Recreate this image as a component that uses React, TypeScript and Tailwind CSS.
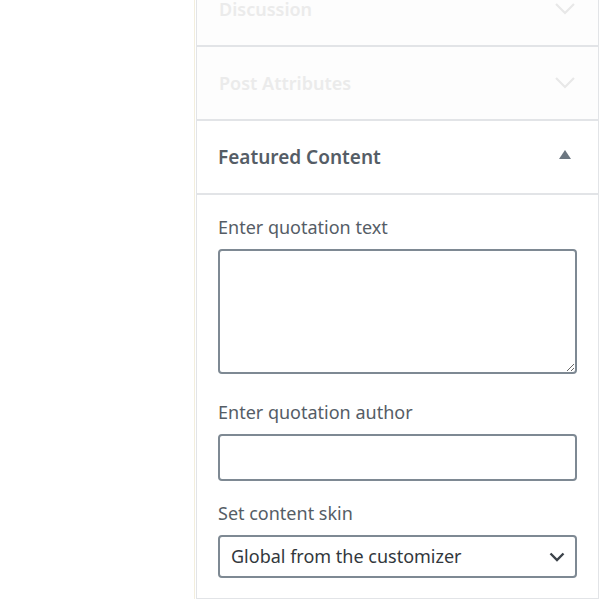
import React from "react";

function Chevron({ className }: { className?: string }) {
  return (
    <svg width="22" height="14" viewBox="0 0 22 14" className={className}>
      <path d="M2 2l9 9 9-9" fill="none" stroke="currentColor" strokeWidth="2.2" />
    </svg>
  );
}

function FadedSection({ title }: { title: string }) {
  return (
    <div className="h-[74px] border-b-2 border-[#e2e4e7] bg-[#fdfdfd] flex items-center justify-between pl-[22px] pr-[22px]">
      <span className="text-[18px] font-semibold text-[#ebebeb]">{title}</span>
      <Chevron className="text-[#e8e8e8]" />
    </div>
  );
}

export default function App() {
  return (
    <div
      className="w-[600px] h-[600px] overflow-hidden bg-white"
      style={{ fontFamily: '"Noto Sans", "Open Sans", sans-serif' }}
    >
      <div className="ml-[194px] w-[405px] border-l border-[#f3eedd]">
        <div className="-mt-[27px] ml-px border-l border-r border-b border-[#e2e4e7]">
          <FadedSection title="Discussion" />
          <FadedSection title="Post Attributes" />

          {/* Featured Content header */}
          <div className="h-[74px] border-b-2 border-[#e2e4e7] flex items-center justify-between pl-[21px] pr-[27px]">
            <span className="text-[19px] font-semibold text-[#555d66]">Featured Content</span>
            <svg width="12" height="9" viewBox="0 0 12 9" className="-mt-[6px]">
              <path d="M6 0L12 9H0z" fill="#6c7781" />
            </svg>
          </div>

          {/* body */}
          <div className="pt-[19px] pb-[20px] pl-[21px] pr-[19px] text-[#555d66]">
            <label className="block text-[18px] leading-[26px] mb-[9px]">Enter quotation text</label>
            <textarea className="block w-[359px] h-[125px] border-2 border-[#7e8993] rounded-[4px] bg-white resize-y" />

            <label className="block text-[18px] leading-[26px] mt-[25px] mb-[9px]">Enter quotation author</label>
            <input type="text" className="block w-[359px] h-[47px] border-2 border-[#7e8993] rounded-[4px] bg-white" />

            <label className="block text-[18px] leading-[26px] mt-[19px] mb-[9px]">Set content skin</label>
            <div className="w-[359px] h-[43px] border-2 border-[#7e8993] rounded-[4px] flex items-center justify-between pl-[11px] pr-[10px]">
              <span className="text-[18px] text-[#32373c]">Global from the customizer</span>
              <svg width="16" height="10" viewBox="0 0 16 10">
                <path d="M1.5 1.5l6.5 6.5 6.5-6.5" fill="none" stroke="#3c434a" strokeWidth="2.4" />
              </svg>
            </div>
          </div>
        </div>
      </div>
    </div>
  );
}
